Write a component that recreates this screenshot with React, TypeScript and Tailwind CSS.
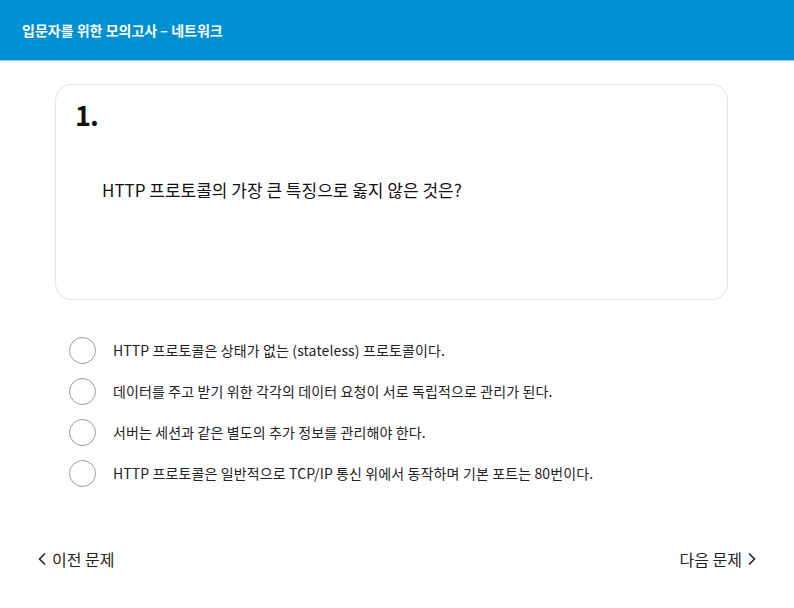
const options = [
  "HTTP 프로토콜은 상태가 없는 (stateless) 프로토콜이다.",
  "데이터를 주고 받기 위한 각각의 데이터 요청이 서로 독립적으로 관리가 된다.",
  "서버는 세션과 같은 별도의 추가 정보를 관리해야 한다.",
  "HTTP 프로토콜은 일반적으로 TCP/IP 통신 위에서 동작하며 기본 포트는 80번이다.",
];

export default function App() {
  return (
    <div
      className="w-[794px] h-[608px] bg-white text-[#111]"
      style={{ fontFamily: '"Noto Sans CJK KR", "Noto Sans", sans-serif' }}
    >
      {/* header */}
      <header className="h-[61px] bg-[#0090d2] border-b border-[#9ad3ee] flex items-center pl-[22px]">
        <h1 className="text-white text-[14px] font-bold">입문자를 위한 모의고사 – 네트워크</h1>
      </header>

      {/* question card */}
      <div className="ml-[55px] mt-[23px] w-[673px] h-[216px] rounded-[16px] border border-[#e3e3e3] px-[19px] pt-[12px]">
        <div className="text-[27px] font-bold leading-[36px] tracking-[-1px]">1.</div>
        <p className="ml-[27px] mt-[45px] text-[17px] leading-[24px]">HTTP 프로토콜의 가장 큰 특징으로 옳지 않은 것은?</p>
      </div>

      {/* options */}
      <ul className="ml-[69px] mt-[37px] flex flex-col gap-[14px]">
        {options.map((o) => (
          <li key={o} className="flex items-center h-[27px]">
            <span className="w-[27px] h-[27px] rounded-full border border-[#9a9a9a] shrink-0" />
            <span className="ml-[17px] text-[14px] tracking-[0.12px] text-[#222]">{o}</span>
          </li>
        ))}
      </ul>

      {/* nav */}
      <div className="mt-[60px] flex justify-between px-[37px] text-[16px] text-[#222]">
        <button className="flex items-center gap-[5px]">
          <svg width="10" height="14" viewBox="0 0 10 14" fill="none" stroke="#222" strokeWidth="1.6">
            <path d="M8 1.5 L2.5 7 L8 12.5" />
          </svg>
          이전 문제
        </button>
        <button className="flex items-center gap-[5px]">
          다음 문제
          <svg width="10" height="14" viewBox="0 0 10 14" fill="none" stroke="#222" strokeWidth="1.6">
            <path d="M2 1.5 L7.5 7 L2 12.5" />
          </svg>
        </button>
      </div>
    </div>
  );
}
